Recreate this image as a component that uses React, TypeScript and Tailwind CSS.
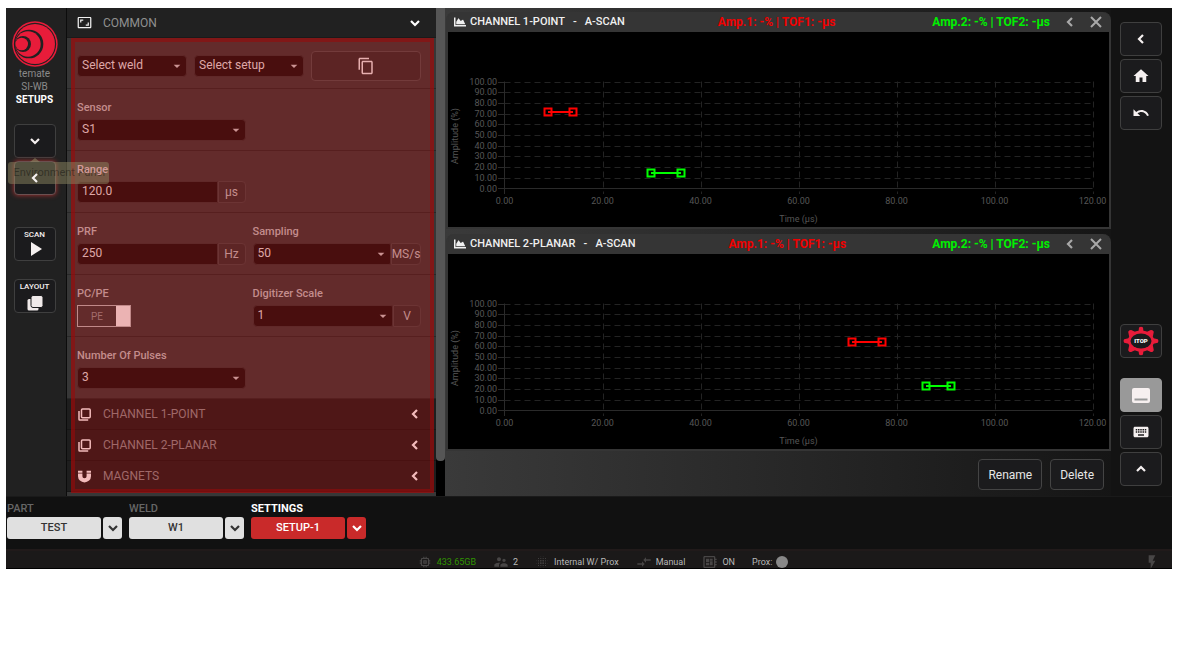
import React from "react";
import {
  MdAspectRatio,
  MdBlurOn,
  MdCompareArrows,
  MdContentCopy,
  MdDeveloperBoard,
  MdFlashOn,
  MdHome,
  MdKeyboard,
  MdMemory,
  MdSupervisorAccount,
  MdUndo,
  MdPlayArrow,
  MdArrowDropDown,
} from "react-icons/md";
import { FaChartArea } from "react-icons/fa";

type Dir = "left" | "down" | "up";

function Chevron({ dir, className = "" }: { dir: Dir; className?: string }) {
  const d = { left: "M8 2 L4 6 L8 10", down: "M2 4 L6 8 L10 4", up: "M2 8 L6 4 L10 8" }[dir];
  return (
    <svg viewBox="0 0 12 12" className={`size-3 ${className}`} fill="none" stroke="currentColor" strokeWidth="2.2" aria-hidden="true">
      <path d={d} />
    </svg>
  );
}

function StackIcon() {
  return (
    <svg viewBox="0 0 13 13" className="size-[13px]" fill="none" stroke="currentColor" strokeWidth="1.5" aria-hidden="true">
      <rect x="3.5" y="1" width="8.7" height="8.7" rx="1" />
      <path d="M1 3v8.2q0 .8.8.8h8.4" />
    </svg>
  );
}

function MagnetIcon() {
  return (
    <svg viewBox="0 0 13 13" className="size-[13px]" fill="currentColor" aria-hidden="true">
      <path d="M0 .8h4.400v2H0z M8.600.8H13v2H8.600z M0 3.600h4.400v2.600a2.100 2.100 0 0 0 4.200 0V3.600H13v2.600a6.500 6.200 0 0 1-13 0z" />
    </svg>
  );
}

function Logo() {
  return (
    <svg viewBox="0 0 138 138" className="size-[46px]" aria-hidden="true">
      <circle cx="69" cy="69" r="68" fill="#e81c3a" />
      <circle cx="69" cy="69" r="63.5" fill="#212121" />
      <circle cx="69" cy="69" r="60" fill="#e81c3a" />
      <circle cx="51" cy="69" r="43" fill="#212121" />
      <circle cx="48" cy="69" r="38" fill="#e81c3a" />
      <circle cx="33" cy="69" r="24" fill="#212121" />
      <circle cx="29" cy="69" r="19" fill="#e81c3a" />
    </svg>
  );
}

function ToolButton({ label, children, className = "border-[#3f3f3f] bg-[#1b1b1d]" }: { label: string; children: React.ReactNode; className?: string }) {
  return (
    <button
      type="button"
      aria-label={label}
      className={`flex h-[34px] w-[42px] flex-col items-center justify-center rounded-[4px] border text-[#f5f0f0] ${className}`}
    >
      {children}
    </button>
  );
}

function Picker({ id, value, label, joined = false }: { id: string; value: string; label?: string; joined?: boolean }) {
  return (
    <div className="relative min-w-0 flex-1">
      <select
        id={id}
        aria-label={label}
        className={`block h-[22px] w-full appearance-none rounded-[4px] border border-[#333333] bg-[#161212] pb-[3px] pl-1 text-[12px] leading-4 text-[#d6d6d6] ${joined ? "rounded-r-[2px]" : ""}`}
      >
        <option>{value}</option>
      </select>
      <MdArrowDropDown className="pointer-events-none absolute top-[3px] right-0.5 size-4 text-[#bdbdbd]" />
    </div>
  );
}

function Unit({ children, className = "w-7" }: { children: string; className?: string }) {
  return (
    <span className={`flex h-[22px] shrink-0 items-center justify-center rounded-r-[4px] border border-[#434343] bg-[#303030] text-[12px] text-[#b4b4b4] ${className}`}>
      {children}
    </span>
  );
}

function NumberBox({ id, value, unit }: { id: string; value: string; unit: string }) {
  return (
    <div className="flex">
      <input id={id} defaultValue={value} className="h-[22px] min-w-0 flex-1 rounded-l-[4px] border border-[#333333] bg-[#161212] pb-[3px] pl-1 text-[12px] text-[#d6d6d6]" />
      <Unit>{unit}</Unit>
    </div>
  );
}

function Field({ id, label, raised = false, children }: { id: string; label: string; raised?: boolean; children: React.ReactNode }) {
  return (
    <div className="flex flex-col gap-[3px]">
      <label htmlFor={id} className={`text-[11px] leading-4 font-medium ${raised ? "relative z-30 text-[#d39a98]" : "text-[#b4b4b4]"}`}>
        {label}
      </label>
      {children}
    </div>
  );
}

function FieldRow({ children }: { children: React.ReactNode }) {
  return <div className="grid grid-cols-2 gap-[7px] border-b border-[#282828] bg-[#373737] pt-[11px] pr-[15px] pb-[9px] pl-2.5">{children}</div>;
}

function Section({ title, icon }: { title: string; icon: React.ReactNode }) {
  return (
    <button type="button" className="flex h-[31px] w-full items-center border-b border-[#161616] bg-[#1e1e1e] pr-[15px] pl-[11px] text-left text-[12px] text-[#858585]">
      <span className="flex w-[25px] text-[#f0f0f0]">{icon}</span>
      <span className="flex-1">{title}</span>
      <Chevron dir="left" className="text-[#f0f0f0]" />
    </button>
  );
}

interface Gate {
  color: string;
  from: number;
  to: number;
  y: number;
}

function Plot({ name, gates }: { name: string; gates: Gate[] }) {
  const left = 56.5;
  const top = 49.5;
  const px = (v: number) => left + v * 4.9;
  const py = (v: number) => top + 107 - v * 1.07;
  const ys = Array.from({ length: 11 }, (_, i) => i * 10);
  const xs = Array.from({ length: 7 }, (_, i) => i * 20);
  return (
    <svg viewBox="0 0 661 195" className="block h-auto w-full bg-black text-[9px]" role="img" aria-label={name}>
      <g stroke="#232323" strokeDasharray="6 4">
        {ys.slice(1).map((v) => (
          <path key={v} d={`M${left} ${Math.round(py(v)) + 0.5}H${px(120)}`} />
        ))}
        {xs.slice(1).map((v) => (
          <path key={v} d={`M${Math.round(px(v)) + 0.5} ${top}V162`} />
        ))}
      </g>
      <g stroke="#2a2a2a">
        <path d={`M${left} ${top}V162 M50 156.5H${px(120)}`} />
        {ys.slice(1).map((v) => (
          <path key={v} d={`M50 ${Math.round(py(v)) + 0.5}h6`} />
        ))}
      </g>
      <g fill="#565656">
        {ys.map((v) => (
          <text key={v} x="49" y={py(v) + 3} textAnchor="end">
            {v.toFixed(2)}
          </text>
        ))}
        {xs.map((v) => (
          <text key={v} x={px(v)} y="172" textAnchor="middle">
            {v.toFixed(2)}
          </text>
        ))}
        <text x={px(60)} y="190" textAnchor="middle">
          Time (µs)
        </text>
        <text transform="translate(10 104) rotate(-90)" textAnchor="middle">
          Amplitude (%)
        </text>
      </g>
      {gates.map((g) => (
        <g key={g.color} stroke={g.color} strokeWidth="2" fill="none">
          <path d={`M${g.from} ${g.y}H${g.to}`} />
          <rect x={g.from - 3.5} y={g.y - 3.5} width="7" height="7" />
          <rect x={g.to - 3.5} y={g.y - 3.5} width="7" height="7" />
        </g>
      ))}
    </svg>
  );
}

function ChartPanel({ title, gates }: { title: string; gates: Gate[] }) {
  return (
    <section className="rounded-t-[8px] border-x-2 border-b-2 border-[#353535] bg-[#353535]">
      <header className="flex h-5 items-center pr-[7px] pl-1.5">
        <FaChartArea className="mr-1 size-3 text-[#f0f0f0]" />
        <h2 className="text-[11px] leading-5 font-medium whitespace-pre text-[#f0f0f0]">{`${title}   -   A-SCAN`}</h2>
        <span className="flex-1 pl-[93px] text-[12px] leading-5 font-bold text-[#f00000]">Amp.1: -% | TOF1: -µs</span>
        <span className="text-[12px] leading-5 font-bold text-[#00f000]">Amp.2: -% | TOF2: -µs</span>
        <button type="button" aria-label="Previous view" className="ml-3.5 text-[#a8a8a8]">
          <Chevron dir="left" />
        </button>
        <button type="button" aria-label="Close chart" className="ml-3.5 text-[#a8a8a8]">
          <svg viewBox="0 0 12 12" className="size-3" stroke="currentColor" strokeWidth="2" aria-hidden="true">
            <path d="M1 1l10 10M11 1L1 11" />
          </svg>
        </button>
      </header>
      <Plot name={`${title} A-scan`} gates={gates} />
    </section>
  );
}

function Crumb({ label, value, active = false }: { label: string; value: string; active?: boolean }) {
  const tone = active ? "bg-[#c92a2a] text-white" : "bg-[#e0e0e0] text-[#333333]";
  return (
    <div className="w-[115px]">
      <div className={`text-[11px] leading-4 ${active ? "font-bold text-white" : "font-medium text-[#666666]"}`}>{label}</div>
      <div className="flex gap-0.5">
        <button type="button" className={`h-[22px] flex-1 rounded-[3px] text-[11px] font-medium ${tone}`}>
          {value}
        </button>
        <button type="button" aria-label={`Choose ${label.toLowerCase()}`} className={`flex h-[22px] w-[19px] items-center justify-center rounded-[3px] ${tone}`}>
          <Chevron dir="down" />
        </button>
      </div>
    </div>
  );
}

function GearBadge() {
  return (
    <svg viewBox="0 0 36 30" className="h-[30px] w-9" aria-hidden="true">
      <g fill="#e81c3a">
        <ellipse cx="18" cy="15" rx="13" ry="10.500" />
        <path d="M15.500 6l.5-4.500q2-1.600 4 0L20.500 6z M15.500 24l.5 4.500q2 1.600 4 0L20.500 24z M6.500 12L1.200 13.300q-1.200 1.700 0 3.400L6.500 18z M29.500 12l5.300 1.300q1.200 1.700 0 3.400L29.500 18z M6.200 11L5.200 5.800Q6 3.700 8.200 4L12.500 6z M29.800 11l1-5.200Q30 3.700 27.800 4L23.500 6z M6.200 19l-1 5.200q.8 2.100 3 1.800L12.500 24z M29.800 19l1 5.200q-.8 2.100-3 1.800L23.500 24z" />
      </g>
      <ellipse cx="18" cy="15" rx="10.500" ry="7.500" fill="#1b1b1d" />
      <text x="18" y="17" textAnchor="middle" fill="#ffffff" className="text-[6px] font-black">
        ITOP
      </text>
    </svg>
  );
}

export default function App() {
  return (
    <div className="bg-white pt-2 pr-[9px] pl-1.5 font-[Roboto,sans-serif]">
      <div className="border-t border-[#2a2a2a] bg-[#111111]">
        <main className="-mt-px flex">
          <nav aria-label="Setups" className="flex w-[60px] shrink-0 flex-col items-center bg-[#212121] pt-[13px] pr-[3px]">
            <Logo />
            <p className="text-center text-[10px] leading-[13px] text-[#8a8a8a]">
              temate
              <br />
              SI-WB
              <br />
              <b className="text-white">SETUPS</b>
            </p>
            <div className="mt-[18px] flex flex-col gap-[3px]">
              <ToolButton label="Expand">
                <Chevron dir="down" />
              </ToolButton>
              <div className="relative">
                <ToolButton label="Environment Panel" className="border-[#6b5050] bg-[#1b1b1d] shadow-[0_0_5px_#b03030]">
                  <Chevron dir="left" className="relative z-30" />
                </ToolButton>
                <div role="tooltip" className="pointer-events-none absolute top-px -left-1.5 z-20 h-[22px] w-[101px] rounded-[3px] bg-[#8c8660]/50 pl-1.5 text-[11px] leading-[22px] whitespace-nowrap text-black/40">
                  Environment Panel
                  <span className="absolute -top-1 left-[22px] border-x-[5px] border-b-4 border-x-transparent border-b-[#8c8660]/60" />
                </div>
              </div>
            </div>
            <div className="mt-8 flex flex-col gap-[18px]">
              <ToolButton label="Scan">
                <span className="text-[8px] leading-[9px] font-medium">SCAN</span>
                <MdPlayArrow className="-my-0.5 size-6" />
              </ToolButton>
              <ToolButton label="Layout">
                <span className="text-[8px] leading-[9px] font-medium">LAYOUT</span>
                <svg viewBox="0 0 16 16" className="mt-1 size-4" aria-hidden="true">
                  <rect x="0.500" y="4" width="11" height="11.500" rx="1.500" fill="#f0eaea" />
                  <rect x="4" y="0.500" width="12" height="12" rx="2" fill="#f0eaea" stroke="#1b1b1d" />
                </svg>
              </ToolButton>
            </div>
          </nav>

          <div className="relative w-[370px] shrink-0 border-l border-[#0c0c0c] bg-[#373737] pb-1">
            <button type="button" className="flex h-[30px] w-full items-center border-b border-[#1a1a1a] bg-[#212121] pr-[15px] pl-2.5 text-left text-[12px] text-[#909090]">
              <MdAspectRatio className="mr-[11px] size-[15px] text-[#f0f0f0]" />
              <span className="flex-1">COMMON</span>
              <Chevron dir="down" className="text-white" />
            </button>
            <div className="grid h-[51px] grid-cols-3 items-center gap-[7px] border-b border-[#282828] pt-1.5 pr-[15px] pl-2.5">
              <Picker id="weld" label="Weld" value="Select weld" />
              <Picker id="setup" label="Setup" value="Select setup" />
              <button type="button" aria-label="Copy setup" className="flex h-[30px] items-center justify-center rounded-[4px] border border-[#4c4c4c] bg-[#2e2e2e] text-[#e0e0e0]">
                <MdContentCopy className="size-[18px]" />
              </button>
            </div>
            <FieldRow>
              <Field id="sensor" label="Sensor">
                <Picker id="sensor" value="S1" />
              </Field>
            </FieldRow>
            <FieldRow>
              <Field id="range" label="Range" raised>
                <NumberBox id="range" value="120.0" unit="µs" />
              </Field>
            </FieldRow>
            <FieldRow>
              <Field id="prf" label="PRF">
                <NumberBox id="prf" value="250" unit="Hz" />
              </Field>
              <Field id="sampling" label="Sampling">
                <div className="flex">
                  <Picker id="sampling" value="50" joined />
                  <Unit className="w-[30px]">MS/s</Unit>
                </div>
              </Field>
            </FieldRow>
            <FieldRow>
              <Field id="pcpe" label="PC/PE">
                <button id="pcpe" type="button" role="switch" aria-checked="true" className="flex h-[22px] w-[54px] border border-[#b0b0b0] text-[10px] text-[#8a8a8a]">
                  <span className="flex-1 self-center text-center">PE</span>
                  <span className="h-full w-3.5 bg-[#e6e6e6]" />
                </button>
              </Field>
              <Field id="scale" label="Digitizer Scale">
                <div className="flex">
                  <Picker id="scale" value="1" joined />
                  <Unit>V</Unit>
                </div>
              </Field>
            </FieldRow>
            <FieldRow>
              <Field id="pulses" label="Number Of Pulses">
                <Picker id="pulses" value="3" />
              </Field>
            </FieldRow>
            <Section title="CHANNEL 1-POINT" icon={<StackIcon />} />
            <Section title="CHANNEL 2-PLANAR" icon={<StackIcon />} />
            <Section title="MAGNETS" icon={<MagnetIcon />} />
            <div className="pointer-events-none absolute top-[30px] right-0.5 bottom-[3px] left-1 border-4 border-[#960a0a]/60 bg-[#ff0000]/22" />
          </div>

          <div className="w-[9px] shrink-0 bg-black pb-[35px]">
            <div className="h-full rounded-b-[4px] bg-[#565656]" />
          </div>

          <div className="flex min-w-0 flex-1 bg-linear-to-r from-[#3a3a3a] via-[#262626] to-[#121212] pl-px">
            <div className="flex min-w-0 flex-1 flex-col gap-[5px] pt-1">
              <ChartPanel
                title="CHANNEL 1-POINT"
                gates={[
                  { color: "#ff0000", from: 100, to: 125, y: 80 },
                  { color: "#00ff00", from: 203, to: 233, y: 141 },
                ]}
              />
              <ChartPanel
                title="CHANNEL 2-PLANAR"
                gates={[
                  { color: "#ff0000", from: 404, to: 434, y: 88 },
                  { color: "#00ff00", from: 478, to: 503, y: 132 },
                ]}
              />
              <div className="mt-[3px] flex justify-end gap-2 pr-[7px]">
                <button type="button" className="h-[31px] rounded-[4px] border border-[#444444] bg-[#1b1b1d] px-[9px] text-[12px] text-[#e6e6e6]">
                  Rename
                </button>
                <button type="button" className="h-[31px] rounded-[4px] border border-[#444444] bg-[#1b1b1d] px-[9px] text-[12px] text-[#e6e6e6]">
                  Delete
                </button>
              </div>
            </div>
            <div className="flex w-[61px] shrink-0 flex-col items-center bg-[#131313] pt-3.5 pr-px pb-2.5">
              <div className="flex flex-col gap-[3px]">
                <ToolButton label="Back">
                  <Chevron dir="left" />
                </ToolButton>
                <ToolButton label="Home">
                  <MdHome className="size-[18px]" />
                </ToolButton>
                <ToolButton label="Undo">
                  <MdUndo className="size-[18px]" />
                </ToolButton>
              </div>
              <div className="mt-auto flex flex-col gap-[3px]">
                <ToolButton label="Stop" className="mb-[17px] border-[#3f3f3f] bg-[#1b1b1d]">
                  <GearBadge />
                </ToolButton>
                <ToolButton label="Footer panel" className="border-[#999999] bg-[#999999]">
                  <svg viewBox="0 0 18 15" className="h-[15px] w-[18px]" aria-hidden="true">
                    <rect width="18" height="15" rx="2" fill="#f7f0f0" />
                    <rect x="2.500" y="10.500" width="13" height="2" fill="#999999" />
                  </svg>
                </ToolButton>
                <ToolButton label="Keyboard">
                  <MdKeyboard className="size-[18px]" />
                </ToolButton>
                <ToolButton label="Collapse">
                  <Chevron dir="up" />
                </ToolButton>
              </div>
            </div>
          </div>
        </main>

        <div className="flex h-[53px] gap-[7px] border-t border-[#1a1a1a] pt-1 pl-px">
          <Crumb label="PART" value="TEST" />
          <Crumb label="WELD" value="W1" />
          <Crumb label="SETTINGS" value="SETUP-1" active />
        </div>

        <footer className="flex h-5 items-center border-t-2 border-b border-t-[#211a1a] border-b-black bg-[#1b1919] pt-1 pr-3 text-[9px] leading-4 text-[#b8b8b8]">
          <div className="flex flex-1 items-center justify-center gap-[17px] pl-14">
            <span className="flex items-center gap-[5px] text-[#2f9400]">
              <MdMemory className="size-3.5 text-[#484646]" />
              433.65GB
            </span>
            <span className="flex items-center gap-1">
              <MdSupervisorAccount className="size-4 text-[#484646]" />2
            </span>
            <span className="flex items-center gap-[5px]">
              <MdBlurOn className="size-3.5 text-[#484646]" />
              Internal W/ Prox
            </span>
            <span className="flex items-center gap-1">
              <MdCompareArrows className="size-4 text-[#484646]" />
              Manual
            </span>
            <span className="flex items-center gap-1">
              <MdDeveloperBoard className="size-4 text-[#484646]" />
              ON
            </span>
            <span className="flex items-center gap-1">
              Prox:
              <i className="size-3 rounded-full bg-[#888888]" />
            </span>
          </div>
          <MdFlashOn className="size-4 text-[#484646]" />
        </footer>
      </div>
    </div>
  );
}
